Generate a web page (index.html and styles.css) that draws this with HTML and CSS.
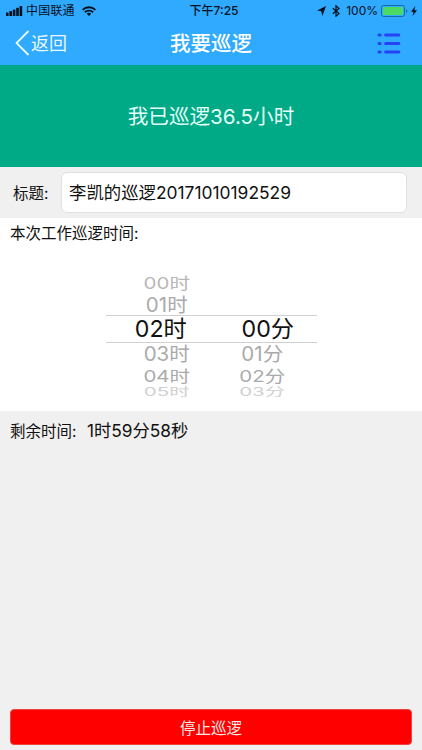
FILE: index.html
```
<!DOCTYPE html>
<html lang="zh-CN">
<head>
    <meta charset="UTF-8">
    <meta name="viewport" content="width=device-width, initial-scale=1.0">
    <title>我要巡逻</title>
    <link rel="stylesheet" href="styles.css">
</head>
<body>
    <div class="app">
        <header class="header">
            <div class="status-bar">
                <div class="status-left">
                    <svg class="signal" width="17" height="10" viewBox="0 0 17 10">
                        <rect x="0" y="6.5" width="2.6" height="3.5" rx=".6"/>
                        <rect x="3.4" y="5" width="2.6" height="5" rx=".6"/>
                        <rect x="6.8" y="3.4" width="2.6" height="6.6" rx=".6"/>
                        <rect x="10.2" y="1.8" width="2.6" height="8.2" rx=".6"/>
                        <rect x="13.6" y="0" width="2.6" height="10" rx=".6"/>
                    </svg>
                    <span class="carrier">中国联通</span>
                    <svg width="14" height="10" viewBox="0 0 14 10" fill="none" stroke="#06101c" stroke-width="1.9">
                        <path d="M.6 3.9a9.2 9.2 0 0 1 12.8 0M2.9 6.3a5.9 5.9 0 0 1 8.2 0"/>
                        <path d="M7 10L4.8 7.8a3.2 3.2 0 0 1 4.4 0z" fill="#06101c" stroke="none"/>
                    </svg>
                </div>
                <div class="clock">下午7:25</div>
                <div class="status-right">
                    <svg width="9" height="10" viewBox="0 0 9 10"><path d="M9 0L5.4 10 4.3 5.3 0 4.6z"/></svg>
                    <svg class="bluetooth" width="8" height="12" viewBox="0 0 8 12" fill="none" stroke="#06101c" stroke-width="1.2"><path d="M.8 3.2l6.2 5.4L4 11.2V.8l3 2.6L.8 8.8"/></svg>
                    <span class="percent">100%</span>
                    <svg class="battery" width="27" height="12" viewBox="0 0 27 12">
                        <rect x=".5" y=".5" width="23" height="11" rx="2" fill="none" stroke="#176baa"/>
                        <rect x="2" y="2" width="20" height="8" rx=".6" fill="#4cd964"/>
                        <path d="M25 4.2q1.4.4 1.4 1.8T25 7.8z" fill="#176baa"/>
                    </svg>
                    <svg width="6" height="10" viewBox="0 0 6 10"><path d="M4.3 0L0 5.7h2.5L1.6 10 6 4.2H3.4z"/></svg>
                </div>
            </div>
            <div class="nav-bar">
                <div class="back">
                    <svg width="15" height="26" viewBox="0 0 15 26" fill="none" stroke="#e9f8ff" stroke-width="1.8"><path d="M13.5 1L1.5 13l12 12"/></svg>
                    <span>返回</span>
                </div>
                <h1 class="title">我要巡逻</h1>
                <svg class="menu" width="24" height="21" viewBox="0 0 24 21">
                    <path d="M2 1.9h1.2M2 10.4h1.2M2 18.9h1.2M8.6 1.9h13.2M8.6 10.4h13.2M8.6 18.9h13.2" stroke="#2542f4" stroke-width="3" stroke-linecap="round"/>
                </svg>
            </div>
        </header>

        <div class="summary">我已巡逻36.5小时</div>

        <div class="form-row">
            <label class="label" for="patrol-title">标题:</label>
            <input id="patrol-title" class="title-input" type="text" value="李凯的巡逻20171010192529">
        </div>

        <div class="duration">
            <div class="duration-label">本次工作巡逻时间:</div>
            <div class="picker">
                <div class="wheel hours">
                    <div class="item up-2"><span>00时</span></div>
                    <div class="item up-1"><span>01时</span></div>
                    <div class="item selected"><span>02时</span></div>
                    <div class="item down-1"><span>03时</span></div>
                    <div class="item down-2"><span>04时</span></div>
                    <div class="item down-3"><span>05时</span></div>
                </div>
                <div class="wheel minutes">
                    <div class="item up-2"></div>
                    <div class="item up-1"></div>
                    <div class="item selected"><span>00分</span></div>
                    <div class="item down-1"><span>01分</span></div>
                    <div class="item down-2"><span>02分</span></div>
                    <div class="item down-3"><span>03分</span></div>
                </div>
            </div>
        </div>

        <div class="remaining">
            <span class="remaining-label">剩余时间:</span>
            <span class="remaining-time">1时59分58秒</span>
        </div>

        <button class="stop-button">停止巡逻</button>
    </div>
</body>
</html>
```

FILE: styles.css
```
* {
    margin: 0;
    padding: 0;
    box-sizing: border-box;
}

body {
    font-family: Inter, 'Noto Sans CJK SC', sans-serif;
    background: #f0f0f0;
    color: #111;
}

.app {
    display: flex;
    flex-direction: column;
    height: 750px;
    overflow: hidden;
}

svg {
    display: block;
    flex: none;
}

.header {
    height: 65px;
    background: #2faaff;
}

.status-bar {
    display: grid;
    grid-template-columns: 1fr auto 1fr;
    align-items: center;
    height: 21px;
    padding: 0 5px 0 6px;
    font-size: 12px;
    line-height: 20px;
    color: #06101c;
    fill: #06101c;
}

.status-left,
.status-right {
    display: flex;
    align-items: center;
}

.carrier {
    margin: 0 7px 0 3px;
    letter-spacing: 0.2px;
}

.clock {
    font-weight: 500;
    padding: 1px 0 0 5px;
}

.status-right {
    justify-content: flex-end;
}

.bluetooth {
    margin: 0 6px;
}

.battery {
    margin: 0 3px 0 3px;
}

.nav-bar {
    display: grid;
    grid-template-columns: 1fr auto 1fr;
    align-items: center;
    height: 44px;
    padding: 0 21px 0 15px;
    color: #fff;
}

.back {
    display: flex;
    align-items: center;
    font-size: 18px;
    line-height: 26px;
    color: #e9f8ff;
    gap: 1px;
}

.back span {
    padding-top: 2px;
}

.title {
    font-size: 20.5px;
    font-weight: 500;
    line-height: 30px;
    padding: 2px 0 0 6px;
}

.menu {
    justify-self: end;
}

.summary {
    display: flex;
    align-items: center;
    justify-content: center;
    height: 102px;
    padding-bottom: 2px;
    background: #00aa87;
    color: #e6fff8;
    font-size: 20.6px;
}

.form-row {
    display: flex;
    align-items: center;
    height: 51px;
    padding: 0 15px 0 13px;
}

.label {
    width: 48px;
    padding-bottom: 1px;
    font-size: 15.5px;
}

.title-input {
    flex: 1;
    min-width: 0;
    height: 41px;
    padding: 0 7px 3px;
    border: 1px solid #e0e0e0;
    border-radius: 6px;
    background: #fff;
    color: #111;
    font-family: inherit;
    font-size: 17.4px;
    outline: none;
}

.duration {
    height: 193px;
    background: #fff;
}

.duration-label {
    height: 55px;
    padding-left: 10px;
    font-size: 15.5px;
    line-height: 32px;
}

.picker {
    display: flex;
    width: 211px;
    margin: 0 auto;
}

.wheel {
    flex: 1;
}

.item {
    display: flex;
    align-items: center;
    justify-content: center;
    font-size: 20.5px;
    line-height: 1;
    color: #aaa;
    white-space: nowrap;
}

.hours .item {
    padding-left: 17px;
}

.minutes .item {
    padding-right: 3px;
}

.up-2 {
    height: 20px;
}

.item.up-2 {
    color: #b8b8b8;
}

.up-2 span {
    transform: scaleY(0.8);
}

.up-1 {
    height: 22px;
    padding-top: 2px;
}

.up-1 span {
    transform: scaleY(0.97);
}

.item.selected {
    height: 28px;
    padding-top: 1px;
    border-top: 1px solid #d0d0d0;
    border-bottom: 1px solid #d0d0d0;
    color: #111;
    font-size: 23.2px;
}

.hours .item.selected {
    padding-left: 5px;
}

.minutes .item.selected {
    padding-left: 11px;
}

.down-1 {
    height: 22px;
    padding-top: 1px;
}

.down-1 span {
    transform: scaleY(0.95);
}

.down-2 {
    height: 20px;
    padding-top: 2px;
}

.down-2 span {
    transform: scaleY(0.8);
}

.item.down-3 {
    height: 14px;
    padding-top: 1px;
    color: #d0d0d0;
}

.down-3 span {
    transform: scaleY(0.55);
}

.remaining {
    display: flex;
    align-items: center;
    height: 37px;
    padding-left: 10px;
}

.remaining-label {
    width: 77px;
    font-size: 15.5px;
}

.remaining-time {
    font-size: 17.3px;
}

.stop-button {
    height: 36px;
    margin: auto 10px 5px;
    border: 1px solid #f04040;
    border-radius: 4px;
    background: #f00;
    color: #ffe8e4;
    font-family: inherit;
    font-size: 15.5px;
}
```
